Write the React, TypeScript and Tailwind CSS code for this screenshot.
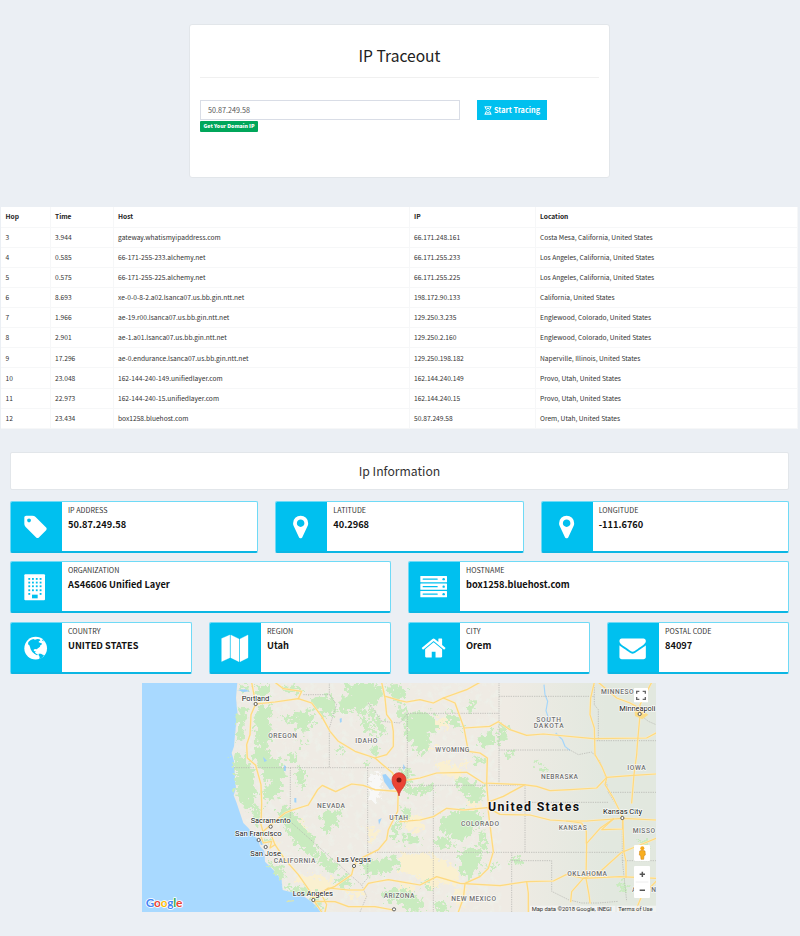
import type { ReactNode } from 'react';

const hops = [
  ['3', '3.944', 'gateway.whatismyipaddress.com', '66.171.248.161', 'Costa Mesa, California, United States'],
  ['4', '0.585', '66-171-255-233.alchemy.net', '66.171.255.233', 'Los Angeles, California, United States'],
  ['5', '0.575', '66-171-255-225.alchemy.net', '66.171.255.225', 'Los Angeles, California, United States'],
  ['6', '8.693', 'xe-0-0-8-2.a02.lsanca07.us.bb.gin.ntt.net', '198.172.90.133', 'California, United States'],
  ['7', '1.966', 'ae-19.r00.lsanca07.us.bb.gin.ntt.net', '129.250.3.235', 'Englewood, Colorado, United States'],
  ['8', '2.901', 'ae-1.a01.lsanca07.us.bb.gin.ntt.net', '129.250.2.160', 'Englewood, Colorado, United States'],
  ['9', '17.296', 'ae-0.endurance.lsanca07.us.bb.gin.ntt.net', '129.250.198.182', 'Naperville, Illinois, United States'],
  ['10', '23.048', '162-144-240-149.unifiedlayer.com', '162.144.240.149', 'Provo, Utah, United States'],
  ['11', '22.973', '162-144-240-15.unifiedlayer.com', '162.144.240.15', 'Provo, Utah, United States'],
  ['12', '23.434', 'box1258.bluehost.com', '50.87.249.58', 'Orem, Utah, United States'],
];

const Glyph = ({ d }: { d: string }) => (
  <g transform="translate(37.3 38.3) scale(.0442)">
    <path fillRule="evenodd" d={d} />
  </g>
);

const pin = (
  <Glyph d="M1152 640q0-106-75-181t-181-75-181 75-75 181 75 181 181 75 181-75 75-181zm256 0q0 109-33 179l-364 774q-16 33-47.500 52t-67.500 19-67.500-19-46.500-52l-365-774q-33-70-33-179 0-212 150-362t362-150 362 150 150 362z" />
);
const tag = (
  <Glyph d="M576 448q0-53-37.500-90.500t-90.500-37.500-90.500 37.500-37.500 90.500 37.500 90.500 90.500 37.500 90.500-37.500 37.500-90.500zm1067 576q0 53-37 90l-491 492q-39 37-91 37-53 0-90-37l-715-716q-38-37-64.500-101t-26.500-117v-416q0-52 38-90t90-38h416q53 0 117 26.500t102 64.500l715 714q37 39 37 91z" />
);
const home = (
  <Glyph d="M1472 992v480q0 26-19 45t-45 19h-384v-384h-256v384h-384q-26 0-45-19t-19-45v-480q0-1 .5-3t.5-3l575-474 575 474q1 2 1 6zm223-69l-62 74q-8 9-21 11h-3q-13 0-21-7l-692-577-692 577q-12 8-24 7-13-2-21-11l-62-74q-8-10-7-23.500t11-21.500l719-599q32-26 76-26t76 26l244 204v-195q0-14 9-23t23-9h192q14 0 23 9t9 23v408l219 182q10 8 11 21.500t-7 23.500z" />
);
const mail = (
  <Glyph d="M1792 710v794q0 66-47 113t-113 47h-1472q-66 0-113-47t-47-113v-794q44 49 101 87 362 246 497 345 57 42 92.500 65.500t94.500 48 110 24.500h2q51 0 110-24.500t94.500-48 92.500-65.500q170-123 498-345 57-39 100-87zm0-294q0 79-49 151t-122 123q-376 261-468 325-10 7-42.500 30.500t-54 38-52 32.500-57.500 27-50 9h-2q-23 0-50-9t-57.500-27-52-32.500-54-38-42.500-30.500q-91-64-262-182.500t-205-142.500q-62-42-117-115.500t-55-136.500q0-78 41.500-130t118.500-52h1472q65 0 112.500 47t47.500 113z" />
);
const building = (
  <>
    <rect x="43" y="40" width="62" height="78" rx="3" />
    <g fill="#00c0ef">
      {[51, 62, 73, 85, 96].map((y) =>
        [55, 66, 77.5, 89].map((x) =>
          y === 96 && x > 60 && x < 80 ? null : <rect key={x + '-' + y} x={x} y={y} width="5.500" height="5.500" />,
        ),
      )}
      <rect x="66" y="101" width="17" height="11" />
    </g>
  </>
);
const server = (
  <>
    {[45, 67.5, 90].map((y) => (
      <g key={y}>
        <rect x="37" y={y} width="80" height="19" rx="1.500" />
        <rect x="44" y={y + 7.5} width="45" height="4" rx="1" fill="#00c0ef" />
        <circle cx="107" cy={y + 9.5} r="3.600" fill="#00c0ef" />
      </g>
    ))}
  </>
);
const globe = (
  <>
    <circle cx="77" cy="78.500" r="34" />
    <g fill="#00c0ef">
      <path d="M55 60l7-6 8-3 5 2 7-2 7 1 2 4-4 1-1 4 6 2 3 1 1 3-5 3-1 4-5 4-5 4-5-1-4 2 1 5 5-1-2 5 4 3 5 3-3 2-7-4-7-6-5-8-2-7-2-5-4-3z" />
      <path d="M86 95l7 0 5 3 4 1-3 5-5 5-6 3 1-7-3-5z" />
      <path d="M98 53l4 5-4-1-2-3z" />
    </g>
  </>
);
const foldedMap = (
  <path d="M38 49.500L62.500 39v68L38 118.500zM65.500 39L90 51v68L65.500 107zM93 51l24-12v68l-24 12z" stroke="#fff" strokeWidth="1" strokeLinejoin="round" />
);

function InfoBox({ icon, label, value }: { icon: ReactNode; label: string; value: string }) {
  return (
    <div className="flex h-[52px] min-w-0 flex-1 overflow-hidden rounded-[2px] border border-[#6fdaf6] border-b-2 border-b-[#0bb6e3] bg-white">
      <div className="-mt-px -mb-0.5 -ml-px h-[52px] w-[52px] shrink-0 bg-[#00c0ef]">
        <svg viewBox="0 0 156 156" className="size-[52px] fill-white">{icon}</svg>
      </div>
      <div className="pt-[4px] pl-[6px] whitespace-nowrap">
        <div className="text-[7.150px] leading-[9px] text-[#333]">{label}</div>
        <div className="mt-[3px] text-[9.250px] leading-[12px] font-bold text-[#111]">{value}</div>
      </div>
    </div>
  );
}

const greens = [
  // Cascades and the Pacific coast ranges
  '368,85 395,78 412,100 402,135 414,175 392,205 410,238 442,250 452,295 425,318 392,305 372,265 350,235 368,195 356,140',
  '308,95 328,85 333,105 325,180 304,190', '298,222 325,232 348,262 356,300 362,350 345,395 318,385 304,340 300,290 292,250',
  '312,20 335,18 345,40 322,45', '360,18 405,18 400,48 378,70 360,45',
  // eastern Oregon
  '438,108 480,118 500,100 528,92 535,135 518,162 490,158 490,140 475,132 440,128', '440,24 480,22 500,45 460,44',
  '528,62 568,50 600,70 603,105 575,118 552,96 530,85', '482,270 512,278 506,330 488,325', '485,185 520,195 500,210',
  '460,232 490,226 486,252 466,250', '400,318 440,310 440,345 400,372 378,352',
  // Idaho and western Montana
  '628,18 700,14 738,20 745,52 722,80 700,78 690,105 666,115 655,90 625,108 610,70 640,45', '700,80 715,95 752,150 747,178 722,140 700,120',
  '675,118 708,135 728,170 715,172 682,145', '605,200 625,208 622,226 600,214', '710,205 730,210 728,235 708,230', '685,252 700,252 700,268 683,266',
  '750,20 800,18 815,50 790,75 765,50', '790,90 815,85 815,130 790,120',
  // Wyoming
  '812,115 850,100 892,108 912,140 900,165 885,170 880,215 850,230 828,190 812,180', '935,105 970,112 985,150 965,155 942,130',
  '1028,180 1060,168 1060,150 1078,152 1075,200 1030,205', '1090,140 1112,140 1120,175 1108,198 1088,194', '998,75 1022,62 1022,92 1000,98',
  '1010,235 1045,240 1050,255 1020,252', '1110,228 1135,218 1132,232 1112,238', '795,275 825,268 830,320 798,322',
  // Utah and Nevada
  '810,325 895,322 900,340 850,352 810,345', '800,385 828,400 822,430 795,450 795,420', '800,470 835,470 860,490 820,500',
  '560,405 585,400 615,390 608,430 575,470 565,450', '770,440 790,420 788,480 768,490',
  // Colorado
  '968,295 995,298 1010,320 1045,325 1042,370 1015,380 995,350 972,345', '920,415 960,400 1000,390 1035,400 1045,430 1015,450 1000,480 975,490 942,472 915,455',
  '975,520 1020,500 1040,535 1030,575 995,605 975,570', '900,480 940,475 955,505 910,510', '1035,440 1050,470 1060,520 1040,515',
  // Sierra Nevada and southern California
  '435,382 470,390 490,430 530,470 548,520 540,545 505,518 475,495 455,455 435,420', '550,530 575,530 612,565 605,582 575,580 552,552',
  '385,470 400,480 405,500 388,490', '398,552 440,570 460,600 440,602 415,580', '450,625 520,630 560,655 565,690 540,690 525,650 470,645',
  '600,610 640,595 655,615 630,628 600,622', '350,380 380,388 372,440 355,430',
  // Arizona and New Mexico
  '675,560 720,545 780,535 795,565 750,585 700,590', '740,640 810,630 850,655 865,700 820,702 790,670 740,665', '900,670 935,668 940,700 905,700',
  '850,605 880,610 900,640 870,630', '1050,565 1085,555 1080,572 1055,576', '1130,542 1165,545 1160,560 1130,558',
  // Great Plains
  '1200,255 1235,262 1235,272 1205,266', '1450,620 1470,610 1480,645 1458,640', '1515,485 1540,495 1530,520 1510,510',
];

const deserts = [
  '900,115 940,120 935,155 905,150', '900,250 945,255 990,285 970,302 920,285', '880,195 905,205 890,215', '975,245 1000,250 990,265',
  '795,400 860,415 870,455 835,460 800,440', '795,530 870,525 935,550 975,585 960,625 915,612 890,640 850,600 795,580',
  '480,600 530,590 590,605 590,640 540,650 500,620', '470,415 500,425 525,465 500,455', '640,635 690,640 680,660 640,650',
  '960,640 1000,630 985,685 960,680', '700,440 730,455 715,490 700,480', '400,480 440,505 420,500', '795,610 840,618 835,640 800,635', '995,365 1040,385 1015,400',
];

const roads = [
  '350,13 362,78 348,110 345,170 335,200 337,240 362,262 378,320 380,375 378,440 385,465 410,475 420,500 450,545 490,590 525,640 535,665 560,702',
  '362,78 420,72 490,62 530,75 560,115 585,160 610,190 660,220 720,240 755,230 775,205 775,160 770,130 755,110 750,60 740,13',
  '720,240 745,262 773,285 788,330', '420,13 445,32 500,40 490,62',
  '752,55 795,68 815,72 855,65 895,75 925,60 995,35 1035,13',
  '385,460 420,430 450,405 472,396 520,381 548,335 562,322 602,341 650,318 685,322 720,335 785,340',
  '795,310 855,300 905,285 995,283 1045,315 1165,320 1205,325 1245,338 1305,335 1385,330 1415,298 1495,292 1563,288',
  '790,325 788,400 760,455 755,485 730,515 700,530 670,545 656,565 650,590 600,625 540,650',
  '535,660 580,630 640,636 685,636 700,616 720,612 760,605 795,611 855,621 905,596 975,616 1095,623 1175,611 1255,609 1295,589 1345,601 1455,596 1563,601',
  '535,670 600,671 640,686 720,686 775,696', '795,431 855,426 895,416 935,391 985,396 1057,389',
  '925,60 960,75 987,150 1000,220 1035,225 1057,240 1055,320 1060,375 1060,401 1070,481 1075,521 1060,571 1035,596 990,616 985,661 970,702',
  '987,150 1065,145 1090,131 1125,155 1175,172 1225,168 1375,182 1535,180 1563,165',
  '1057,389 1095,409 1185,411 1245,426 1295,429 1355,429 1463,421 1563,426', '1060,372 1105,355 1170,320',
  '1378,13 1367,60 1365,110 1378,150 1380,230 1400,265 1415,300 1410,320 1435,360 1450,391 1463,421 1467,523 1473,551 1473,598',
  '1550,13 1515,80 1515,110 1507,200 1505,230 1497,290 1490,375', '1390,13 1445,60 1485,75 1515,91',
  '1435,423 1395,451 1355,496 1353,601 1362,650 1365,675', '1295,429 1340,435 1354,460 1354,496', '1345,601 1310,641 1307,671', '1345,601 1395,581 1460,523 1515,501 1563,481',
  '1175,611 1180,645 1180,702', '1435,423 1400,455 1463,453 1463,421', '378,475 385,495 410,490 405,510 420,500', '560,650 575,680 570,702',
  '1500,702 1520,655 1563,610',
];

const borders = [
  '297,269 817,269', '466,269 466,431 680,621 695,655 675,702', '698,269 698,600 680,621', '505,50 583,50 583,13', '583,50 605,80 595,110 583,150 583,269',
  '817,322 817,106 1092,106', '1092,13 1092,322', '817,322 1170,322', '895,322 895,702', '1170,322 1170,523', '1170,373 1420,373', '698,523 1462,523',
  '1092,55 1378,55', '1092,216 1305,216 1330,230 1370,222 1395,250 1410,290 1420,343 1440,375 1462,410 1462,548 1475,670',
  '1378,13 1378,80 1390,95 1390,187', '1378,188 1563,188', '1420,343 1563,343', '1130,702 1130,548 1250,548 1250,640 1300,665 1340,675 1390,675 1450,670',
  '1462,548 1563,548', '1130,523 1130,548', '700,75 720,100 740,130 795,135 817,106', '1515,110 1540,130 1563,140',
];

const waters = ['742,290 752,288 775,315 778,332 765,335 748,312', '384,236 396,248 388,252', '447,262 453,264 452,280 446,278', '478,360 484,360 484,374 478,373',
  '372,486 382,490 386,498 378,502', '787,350 793,360 790,370', '614,122 620,120 620,132 615,134', '308,36 330,34 345,40 325,42', '730,425 740,420 732,440', '805,258 812,270 804,275'];

type Label = [string, number, number, number];
const states: Label[] = [
  ['OREGON', 400, 180, 86], ['IDAHO', 661, 196, 66], ['WYOMING', 901, 223, 102], ['SOUTH', 1204, 132, 74], ['DAKOTA', 1196, 151, 90],
  ['NEBRASKA', 1218, 302, 111], ['IOWA', 1477, 275, 55], ['MINNESO', 1398, 47, 98], ['NEVADA', 546, 390, 84], ['UTAH', 763, 425, 56],
  ['CALIFORNIA', 416, 554, 125], ['COLORADO', 978, 445, 114], ['KANSAS', 1271, 455, 84], ['MISSO', 1493, 465, 67], ['OKLAHOMA', 1297, 593, 119],
  ['ARIZONA', 746, 659, 92], ['NEW MEXICO', 949, 670, 134], ['A', 1491, 641, 13], ['N', 1549, 641, 13],
];
const cities: Label[] = [
  ['Portland', 320, 68, 83], ['Sacramento', 347, 434, 120], ['San Francisco', 300, 475, 140], ['San Jose', 346, 533, 92],
  ['Las Vegas', 605, 553, 103], ['Los Angeles', 473, 655, 121], ['Kansas City', 1404, 408, 117], ['Minneapoli', 1453, 98, 108],
];
const dots = [[362, 78], [407, 446], [371, 486], [392, 507], [657, 564], [535, 666], [1462, 420], [1514, 108], [777, 694]];

function TraceMap() {
  return (
    <svg viewBox="21 15 1542 687" className="h-[229px] w-[514px]" fontFamily="Roboto, sans-serif">
      <defs>
        <filter id="terrain" x="0" y="0" width="1" height="1">
          <feTurbulence type="fractalNoise" baseFrequency=".07" numOctaves="4" seed="7" result="n" />
          <feDisplacementMap in="SourceGraphic" in2="n" scale="50" xChannelSelector="R" yChannelSelector="G" />
        </filter>
        <linearGradient id="plains">
          <stop offset=".55" stopColor="#e2e8df" stopOpacity="0" />
          <stop offset=".85" stopColor="#e2e8df" />
        </linearGradient>
        <filter id="relief" x="0" y="0" width="1" height="1">
          <feTurbulence type="fractalNoise" baseFrequency=".05" numOctaves="3" seed="3" />
          <feColorMatrix values="0 0 0 0 .85  0 0 0 0 .89  0 0 0 0 .83  0 0 0 3.500 -1.750" />
          <feComposite in2="SourceGraphic" operator="in" />
        </filter>
      </defs>
      <rect x="21" y="13" width="1542" height="690" fill="#a8d9ff" />
      <path fill="#efebe4" d="M307 13L303 60 308 110 300 170 297 205 290 225 297 250 300 300 303 330 296 352 305 375 315 405 325 435 340 450 360 475 370 485 375 505 388 520 390 551 415 576 440 606 443 636 470 643 500 651 530 671 550 691 565 703H1563V13z" />
      <rect x="570" y="13" width="993" height="690" fill="url(#plains)" />
      <path filter="url(#relief)" opacity=".65" fill="#000" d="M310 13L303 110 297 250 303 340 340 450 390 520 443 630 530 671 565 703H1100V13z" />
      <g filter="url(#terrain)">
        <rect x="21" y="13" width="1542" height="690" fill="none" />
        {deserts.map((p) => <polygon key={p} points={p} fill="#faf0d0" />)}
        {greens.map((p) => <polygon key={p} points={p} fill="#c9ebbf" />)}
        <polygon points="706,290 738,286 742,330 735,365 708,372 700,335" fill="#f8f8f7" />
      </g>
      {waters.map((p) => <polygon key={p} points={p} fill="#9fd2fb" />)}
      <path d="M1227 20l3 30 8 20-5 28 6 18-8 20M1262 165l20 20 8 20 15 12" fill="none" stroke="#a5d6fb" strokeWidth="3.500" />
      <path d="M455 671l22-3M463 668l-8 4" stroke="#d9e5b5" strokeWidth="4" />
      <g fill="none" stroke="#b1b1ac" strokeWidth="2" strokeDasharray="4 3">
        {borders.map((p) => <polyline key={p} points={p} />)}
      </g>
      <g fill="none" strokeLinejoin="round" strokeLinecap="round">
        {roads.map((p) => <polyline key={p} points={p} stroke="#fdeec6" strokeWidth="6" />)}
        {roads.map((p) => <polyline key={p} points={p} stroke="#fdd981" strokeWidth="3.700" />)}
      </g>
      <path d="M1498 94l22 2 20 14-18 14-22-10z" fill="#fbdc86" />
      <g fill="#fff" stroke="#444" strokeWidth="2.500">
        {dots.map(([x, y]) => <circle key={x} cx={x} cy={y} r="4.800" />)}
      </g>
      <g stroke="#fff" strokeOpacity=".75" paintOrder="stroke" strokeLinejoin="round">
        {states.map(([t, x, y, w]) => (
          <text key={t} x={x} y={y} textLength={w} fontSize="20" fontWeight="500" fill="#707070" strokeWidth="4">{t}</text>
        ))}
        {cities.map(([t, x, y, w]) => (
          <text key={t} x={x} y={y} textLength={w} fontSize="23" fill="#222" strokeWidth="5">{t}</text>
        ))}
        <text x="1059" y="398" textLength="273" fontSize="37" fontWeight="700" fill="#111" strokeWidth="5">United States</text>
      </g>
      <path d="M792 354C789 333 771 327 771 305a21 21 0 0 1 42 0C813 327 795 333 792 354z" fill="#ea4335" stroke="#c5302a" strokeWidth="2" />
      <circle cx="792" cy="306" r="7.500" fill="#7c1512" />
      <text x="32" y="686" textLength="110" fontFamily="Lato, sans-serif" fontSize="36" fontWeight="700" stroke="#fff" strokeWidth="5" strokeLinejoin="round" paintOrder="stroke">
        <tspan fill="#4285f4">G</tspan><tspan fill="#ea4335">o</tspan><tspan fill="#fbbc05">o</tspan><tspan fill="#4285f4">g</tspan><tspan fill="#34a853">l</tspan><tspan fill="#ea4335">e</tspan>
      </text>
      <rect x="1185" y="683" width="378" height="20" fill="#f5f5f5" fillOpacity=".8" />
      <path d="M1443 683v19" stroke="#ddd" strokeWidth="2" />
      <g fontSize="17.500" fill="#333">
        <text x="1190" y="698" textLength="240">Map data ©2018 Google, INEGI</text>
        <text x="1450" y="698" textLength="103">Terms of Use</text>
      </g>
      <g fill="#fff">
        <rect x="1497" y="30" width="42" height="43" rx="2" />
        <rect x="1497" y="501" width="48" height="48" rx="3" />
        <rect x="1497" y="564" width="48" height="96" rx="3" />
      </g>
      <path d="M1505 47v-7h8M1523 40h8v7M1531 57v7h-8M1513 64h-8v-7" fill="none" stroke="#666" strokeWidth="4" />
      <path d="M1502 612h38" stroke="#e6e6e6" strokeWidth="2" />
      <path d="M1514 589h16M1522 581v16M1514 637h16" stroke="#555" strokeWidth="4.500" />
      <circle cx="1522" cy="511" r="6" fill="#f5a81c" />
      <path d="M1514 519q8-4 16 0l1 12-4 2-1 11h-8l-1-11-4-2z" fill="#f8ae20" stroke="#c87d0c" strokeWidth="1.500" />
    </svg>
  );
}

export default function App() {
  return (
    <div className="flex h-[936px] w-[800px] flex-col overflow-hidden bg-[#ebeff4] pt-[24px] font-['Noto_Sans_CJK_SC',sans-serif] text-[#333]">
      <section className="ml-[189px] h-[154px] w-[421px] rounded-[3px] border border-[#e2e6ea] bg-white px-[10px]">
        <h1 className="flex h-[53px] items-center justify-center border-b border-[#f0f0f0] pt-[10px] text-[15.600px] leading-none text-[#222]">IP Traceout</h1>
        <div className="mt-[22px] flex items-start">
          <div className="w-[260px]">
            <div className="flex h-[20px] items-center border border-[#d9dde6] pl-[7px] text-[7.200px] text-[#555]">50.87.249.58</div>
            <div className="mt-px flex h-[11px] w-[58px] items-center justify-center rounded-[1px] bg-[#00a65a] text-[5.250px] font-black whitespace-nowrap text-white">Get Your Domain IP</div>
          </div>
          <button className="ml-[17px] flex h-[20px] w-[70px] items-center justify-center gap-[2px] bg-[#00c0ef] text-[7.300px] font-bold whitespace-nowrap text-white">
            <svg viewBox="0 0 24 28" className="h-[9px] w-[8px] fill-none stroke-white" strokeWidth="3">
              <path d="M1 2.500h22M1 25.500h22M4 3c0 7 3 8 6 11-3 3-6 4-6 11M20 3c0 7-3 8-6 11 3 3 6 4 6 11M7 21h10M8 8h8" />
            </svg>
            Start Tracing
          </button>
        </div>
      </section>

      <table className="mt-[29px] ml-px w-[797px] table-fixed border-collapse bg-white text-left text-[6.650px] leading-none">
        <colgroup>
          <col className="w-[49px]" /><col className="w-[63px]" /><col className="w-[296px]" /><col className="w-[126px]" /><col />
        </colgroup>
        <thead>
          <tr className="h-[20px] text-[#222]">
            {['Hop', 'Time', 'Host', 'IP', 'Location'].map((h) => (
              <th key={h} className="border-r border-b border-[#f6f7f8] p-0 pl-[4.500px] font-bold">{h}</th>
            ))}
          </tr>
        </thead>
        <tbody>
          {hops.map((row) => (
            <tr key={row[0]} className="h-[20.150px]">
              {row.map((cell, i) => (
                <td key={i} className="border-r border-b border-[#f6f7f8] p-0 pl-[4.500px] whitespace-nowrap">{cell}</td>
              ))}
            </tr>
          ))}
        </tbody>
      </table>

      <main className="mt-[23px] flex w-[789px] flex-col pl-[10px]">
        <h2 className="flex h-[38px] items-center justify-center rounded-[2px] border border-[#e2e6ea] bg-white text-[12.200px]">Ip Information</h2>
        <div className="mt-[11px] flex gap-[17px]">
          <InfoBox icon={tag} label="IP ADDRESS" value="50.87.249.58" />
          <InfoBox icon={pin} label="LATITUDE" value="40.2968" />
          <InfoBox icon={pin} label="LONGITUDE" value="-111.6760" />
        </div>
        <div className="mt-[8px] flex gap-[17px]">
          <InfoBox icon={building} label="ORGANIZATION" value="AS46606 Unified Layer" />
          <InfoBox icon={server} label="HOSTNAME" value="box1258.bluehost.com" />
        </div>
        <div className="mt-[9px] flex gap-[17px]">
          <InfoBox icon={globe} label="COUNTRY" value="UNITED STATES" />
          <InfoBox icon={foldedMap} label="REGION" value="Utah" />
          <InfoBox icon={home} label="CITY" value="Orem" />
          <InfoBox icon={mail} label="POSTAL CODE" value="84097" />
        </div>
      </main>
      <div className="mt-[9px] ml-[142px]"><TraceMap /></div>
    </div>
  );
}
